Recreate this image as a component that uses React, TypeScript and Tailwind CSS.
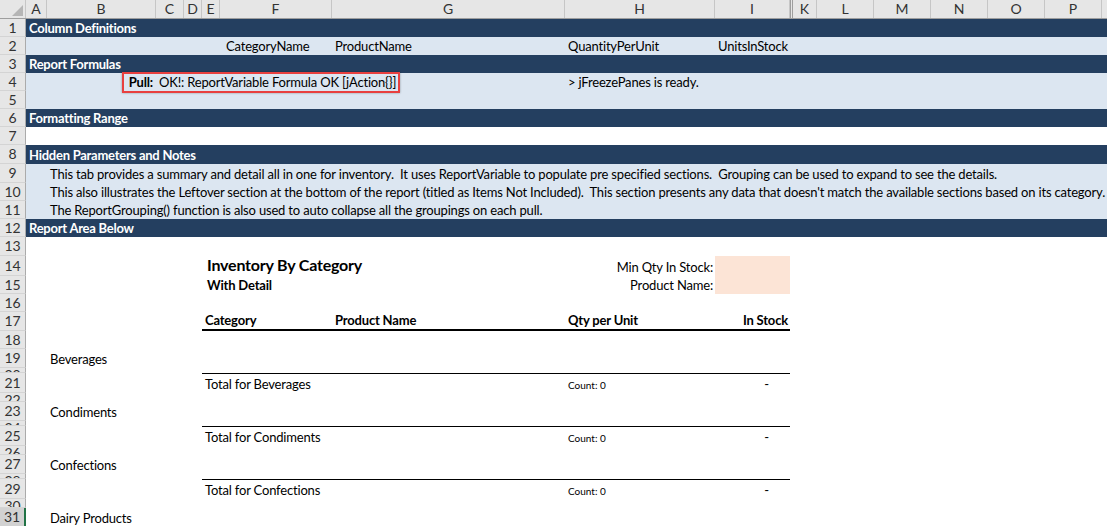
import React from "react";
import clsx from "clsx";

type Cell = { t?: React.ReactNode; c?: string };
type Row = {
  n: number;
  h: string;
  bg?: string;
  small?: boolean;
  selected?: boolean;
  line?: string;
  cells?: Partial<Record<string, Cell>>;
  extra?: React.ReactNode;
};

const COLS = [
  { id: "A", w: "w-[21px]" },
  { id: "B", w: "w-[109px]" },
  { id: "C", w: "w-[28px]" },
  { id: "D", w: "w-[18px]" },
  { id: "E", w: "w-[18px]" },
  { id: "F", w: "w-[112px]" },
  { id: "G", w: "w-[233px]" },
  { id: "H", w: "w-[150px]" },
  { id: "I", w: "w-[75px]" },
  { id: "J", w: "w-[3px]" },
  { id: "K", w: "w-[24px]" },
  { id: "L", w: "w-[57px]" },
  { id: "M", w: "w-[57px]" },
  { id: "N", w: "w-[57px]" },
  { id: "O", w: "w-[57px]" },
  { id: "P", w: "w-[57px]" },
  { id: "Q", w: "w-[40px]" },
];

const REPORT_COLS = ["E", "F", "G", "H", "I"];

const DARK = "bg-[#243f60] text-white font-bold tracking-[-0.25px]";
const LIGHT = "bg-[#dce6f1]";

const band = (text: string): Partial<Record<string, Cell>> => ({
  A: { t: text },
});

const category = (name: string): Partial<Record<string, Cell>> => ({
  B: { t: name },
});

const total = (name: string): Partial<Record<string, Cell>> => ({
  E: { t: `Total for ${name}` },
  H: { t: <span className="text-[10px] leading-[14px] tracking-normal">Count: 0</span> },
  I: { t: "-", c: "justify-end pr-[21px]" },
});

const ROWS: Row[] = [
  { n: 1, h: "h-[18px]", bg: DARK, cells: band("Column Definitions") },
  {
    n: 2,
    h: "h-[18px]",
    bg: LIGHT,
    cells: {
      F: { t: "CategoryName", c: "pl-[6px]" },
      G: { t: "ProductName" },
      H: { t: "QuantityPerUnit" },
      I: { t: "UnitsInStock" },
    },
  },
  { n: 3, h: "h-[18px]", bg: DARK, cells: band("Report Formulas") },
  {
    n: 4,
    h: "h-[18px]",
    bg: LIGHT,
    cells: {
      B: { t: <span className="font-bold">Pull:</span>, c: "justify-end pr-[3px]" },
      C: { t: "OK!: ReportVariable Formula OK [jAction{}]" },
      H: { t: "> jFreezePanes is ready." },
    },
    extra: (
      <div className="absolute left-[96px] -top-[1px] z-10 h-[21px] w-[278px] border-2 border-[#e8403f] shadow-[0_0_2px_rgba(0,0,0,0.35)]" />
    ),
  },
  { n: 5, h: "h-[18px]", bg: LIGHT },
  { n: 6, h: "h-[18px]", bg: DARK, cells: band("Formatting Range") },
  { n: 7, h: "h-[18px]" },
  { n: 8, h: "h-[19px]", bg: DARK, cells: band("Hidden Parameters and Notes") },
  {
    n: 9,
    h: "h-[19px]",
    bg: LIGHT,
    cells: {
      B: {
        t: "This tab provides a summary and detail all in one for inventory.  It uses ReportVariable to populate pre specified sections.  Grouping can be used to expand to see the details.",
      },
    },
  },
  {
    n: 10,
    h: "h-[18px]",
    bg: LIGHT,
    cells: {
      B: {
        t: "This also illustrates the Leftover section at the bottom of the report (titled as Items Not Included).  This section presents any data that doesn't match the available sections based on its category.",
      },
    },
  },
  {
    n: 11,
    h: "h-[18px]",
    bg: LIGHT,
    cells: {
      B: {
        t: "The ReportGrouping() function is also used to auto collapse all the groupings on each pull.",
      },
    },
  },
  { n: 12, h: "h-[18px]", bg: DARK, cells: band("Report Area Below") },
  { n: 13, h: "h-[19px]" },
  {
    n: 14,
    h: "h-[20px]",
    cells: {
      E: {
        t: <span className="text-[16px] font-bold leading-[20px] tracking-[-0.2px]">Inventory By Category</span>,
        c: "pl-[5px]",
      },
      H: { t: "Min Qty In Stock:", c: "justify-end pr-[2px]" },
      I: { c: "bg-[#fce4d6]" },
    },
  },
  {
    n: 15,
    h: "h-[18px]",
    cells: {
      E: { t: <span className="font-bold">With Detail</span>, c: "pl-[5px]" },
      H: { t: "Product Name:", c: "justify-end pr-[2px]" },
      I: { c: "bg-[#fce4d6]" },
    },
  },
  { n: 16, h: "h-[18px]" },
  {
    n: 17,
    h: "h-[19px]",
    line: "border-b-2 border-black",
    cells: {
      E: { t: <span className="font-bold">Category</span> },
      G: { t: <span className="font-bold">Product Name</span> },
      H: { t: <span className="font-bold">Qty per Unit</span> },
      I: { t: <span className="font-bold">In Stock</span>, c: "justify-end pr-[2px]" },
    },
  },
  { n: 18, h: "h-[18px]" },
  { n: 19, h: "h-[19px]", cells: category("Beverages") },
  { n: 20, h: "h-[5px]", small: true },
  { n: 21, h: "h-[20px]", line: "border-t border-black", cells: total("Beverages") },
  { n: 22, h: "h-[9px]", small: true },
  { n: 23, h: "h-[19px]", cells: category("Condiments") },
  { n: 24, h: "h-[5px]", small: true },
  { n: 25, h: "h-[20px]", line: "border-t border-black", cells: total("Condiments") },
  { n: 26, h: "h-[9px]", small: true },
  { n: 27, h: "h-[19px]", cells: category("Confections") },
  { n: 28, h: "h-[5px]", small: true },
  { n: 29, h: "h-[20px]", line: "border-t border-black", cells: total("Confections") },
  { n: 30, h: "h-[9px]", small: true },
  { n: 31, h: "h-[19px]", selected: true, cells: category("Dairy Products") },
];

function ColumnHeader() {
  return (
    <div className="flex h-[19px] border-b border-[#9e9e9e] bg-[#e6e6e6] text-[14px] leading-[18px] tracking-normal text-[#333]">
      <div className="relative w-[26px] shrink-0 border-r border-[#c6c6c6]">
        <svg className="absolute bottom-[2px] right-[2px]" width="11" height="11" viewBox="0 0 11 11">
          <polygon points="11,0 11,11 0,11" fill="#b5b5b5" />
        </svg>
      </div>
      {COLS.map((col) => (
        <div
          key={col.id}
          className={clsx(
            "shrink-0 text-center",
            col.w,
            col.id === "J" ? "border-x border-[#9e9e9e]" : "border-r border-[#c6c6c6]"
          )}
        >
          {col.id === "J" ? "" : col.id}
        </div>
      ))}
    </div>
  );
}

function SheetRow({ row }: { row: Row }) {
  return (
    <div className={clsx("flex", row.h)}>
      <div
        className={clsx(
          "w-[26px] shrink-0 overflow-hidden border-b border-[#d4d4d4] text-center text-[14px] tracking-normal text-[#333]",
          row.selected
            ? "border-r-2 border-r-[#217346] bg-[#d2d2d2]"
            : "border-r border-r-[#ababab] bg-[#e6e6e6]",
          row.small ? "leading-[13px]" : "flex items-center justify-center leading-[16px]"
        )}
      >
        {row.n}
      </div>
      <div className={clsx("relative flex flex-1", row.bg)}>
        {COLS.map((col) => {
          const cell = row.cells?.[col.id];
          return (
            <div
              key={col.id}
              className={clsx(
                "flex shrink-0 items-end whitespace-pre pb-[1px] pl-[3px] leading-[16px]",
                col.w,
                row.line && REPORT_COLS.includes(col.id) && row.line,
                cell?.c
              )}
            >
              {cell?.t}
            </div>
          );
        })}
        {row.extra}
      </div>
    </div>
  );
}

export default function App() {
  return (
    <div className="h-[526px] w-[1107px] overflow-hidden bg-white font-['Lato','Liberation_Sans',sans-serif] text-[13px] tracking-[-0.18px] text-black">
      <ColumnHeader />
      {ROWS.map((row) => (
        <SheetRow key={row.n} row={row} />
      ))}
    </div>
  );
}
